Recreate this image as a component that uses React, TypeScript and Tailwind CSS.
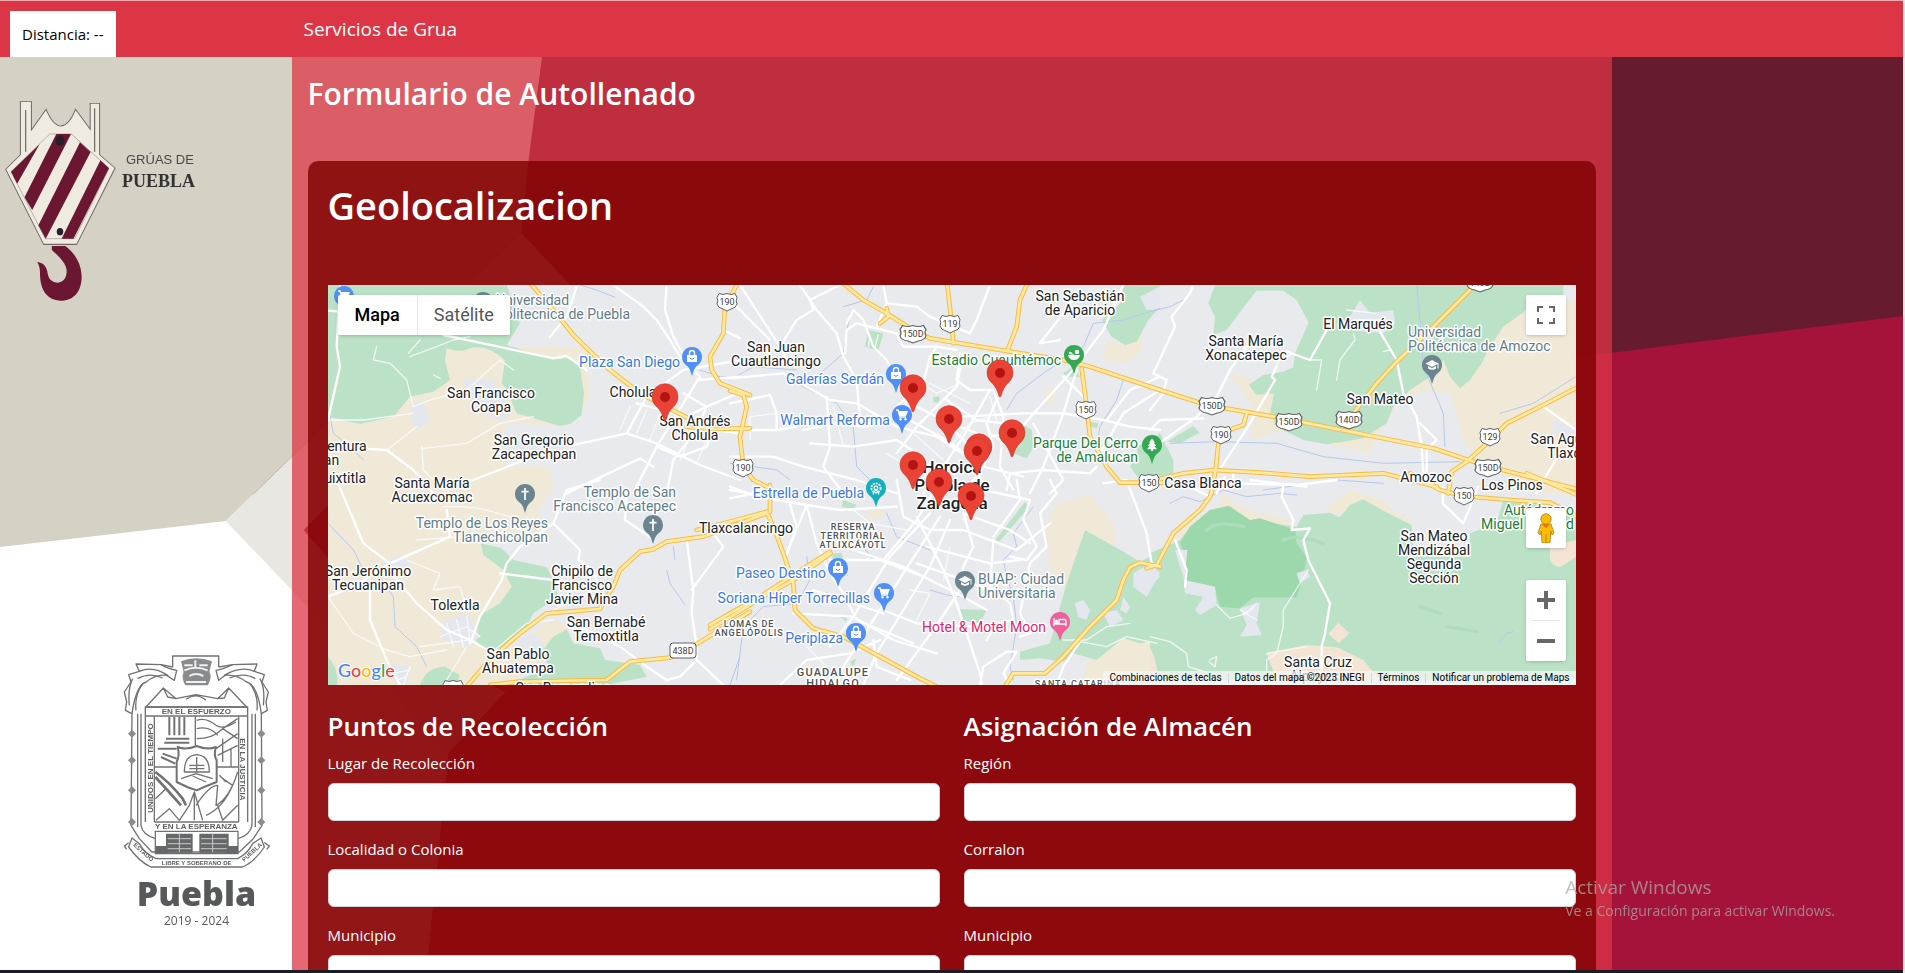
import React from "react";

type Tile = {
  dx: number;
  dy: number;
  sand: string[];
  green: string[];
  forest?: string[];
  town?: string[];
  water?: string[];
  white: string[];
  thin?: string[];
  yellow: string[];
};

/* Six map tiles, drawn at three units per pixel. */
const tiles: Tile[] = [
  {
    dx: -24,
    dy: -15,
    sand: ["M24 200H800L810 350L790 390L740 440L560 430L540 480L560 560L690 560L700 640H24Z"],
    green: [
      "M24 15H480L560 15L600 130L560 195L640 220L720 238L740 228L780 260L792 340L785 405L750 432L720 438L640 415L590 400L560 330L545 310L555 240Q500 190 450 205Q420 220 380 205L375 240L390 300L340 335L270 350L220 410L120 432L24 410Z",
    ],
    town: ["M270 370L310 365L330 420L290 450L275 420Z", "M430 300L520 300L580 400L540 425L450 380Z"],
    water: ["M780 15L830 30L885 52", "M1140 270L1200 290L1260 292", "M30 410L40 460L90 500L130 540"],
    white: [
      "M60 15L50 200L60 260L24 420",
      "M24 92L60 95M370 165L560 205L700 235L740 228L800 270",
      "M880 15L970 80L1010 120L1050 180L1080 230L1140 290L1090 370L1010 500L940 640",
      "M1040 15L1035 90L1060 170L1110 260",
      "M690 170L740 110L770 20",
      "M24 500L200 510L280 570L340 640",
      "M760 495L920 460L980 350L1090 270L1260 240",
      "M640 530L460 600L350 620",
      "M920 460L1010 490L1140 555L1260 600",
      "M950 370L1100 410L1160 380L1230 350L1260 340",
      "M1090 340L1160 380L1130 450L1060 540L1040 640",
      "M1010 500L1080 530L1160 500L1180 450L1260 460",
      "M1210 150L1260 175M1130 300L1260 290",
      "M740 640L960 535L1000 560",
    ],
    thin: [
      "M170 200L160 240L210 250L260 300L280 380",
      "M265 220L300 180M270 230L350 200L400 180L450 170",
      "M280 380L330 360L440 330L540 240L580 270",
      "M310 505L440 490L540 430L640 410",
      "M305 500L310 570L340 600",
      "M340 285L360 295M24 420L130 420L280 400",
      "M200 510L290 440M930 380L900 450M980 390L950 460M1020 400L990 480M1110 470L1080 540M1160 480L1130 550",
    ],
    yellow: [
      "M635 15L700 90L760 165L860 262L960 340L1100 412",
      "M1250 15L1215 80L1210 160L1170 230L1175 270L1200 310L1290 345",
      "M1100 440L1180 447L1290 445",
    ],
  },
  {
    dx: -24,
    dy: 585,
    sand: [
      "M24 0H700L650 100L700 170L480 190L560 250L580 330L480 420L460 480L560 520L600 480L700 415L745 440L660 560L540 620H24Z",
    ],
    green: [
      "M482 190L545 205L580 240L680 262L700 300L715 350L640 400L615 450L560 500L500 515L466 480L480 405L540 370L575 320L550 270L490 225Z",
      "M660 520L700 470L740 448L760 490L840 505L855 540L960 555L980 590L860 615H560L690 560Z",
      "M300 615Q320 560 375 560L418 585L410 620Z",
      "M24 530Q60 570 50 620H24Z",
    ],
    town: ["M360 430L440 400L480 470L440 500L370 480Z", "M180 250L240 225L270 250L210 290Z", "M215 550L270 560L260 615L220 600Z", "M590 480L640 460L680 500L620 520Z"],
    water: ["M24 130L100 210L130 270L180 290L220 350L225 440L290 500L320 560", "M1040 270L1050 310L1095 375", "M1060 200L1065 240", "M1260 530L1230 615"],
    white: [
      "M50 0L130 190L210 250L390 170L380 90",
      "M200 260L290 370L380 450L450 480L520 520",
      "M150 300L150 420L200 540L240 615",
      "M840 0L740 30L700 130L600 200L560 250L545 300L480 410L450 490",
      "M700 130L780 210L775 240L820 270L840 330",
      "M920 40L915 120L990 170",
      "M1100 180L1120 330L1115 400L1130 500L1130 540L1210 615",
      "M1180 160L1210 200L1115 330",
      "M780 440L900 500L980 560L1040 600L1080 590L1130 540",
      "M24 350L100 320L210 250M540 280L700 300",
    ],
    thin: [
      "M290 180L420 170M260 240L360 280L340 330L420 320L440 390",
      "M24 350L100 460L200 510L270 530L380 510",
      "M360 470L440 440L480 470M380 430L400 500M410 420L430 500M440 410L450 480M300 500L450 480",
      "M700 390L740 370L860 310M500 530L620 430L700 420",
      "M370 80L420 80L480 85L570 110L600 150",
      "M270 560L250 615M220 580L270 570M230 600L260 590M380 600L440 500",
    ],
    yellow: [
      "M440 620L500 550L560 495L600 460L680 400L840 387L860 350L880 320L900 270L960 215L1000 208L1040 185L1150 170L1260 130L1340 100",
      "M510 615L600 605L700 603L860 600L930 545L1050 533L1130 492L1290 395",
    ],
  },
  {
    dx: 1206,
    dy: -15,
    sand: ["M1130 180L1180 195L1240 165L1230 220L1190 250L1120 240Z", "M950 320L980 340L960 380L940 360Z"],
    green: [
      "M1175 15H1290V80L1255 120L1220 185L1185 195L1145 170L1115 120L1150 90L1180 60Z",
      "M860 420L905 450L912 500L890 535L850 520L870 480Z",
      "M1290 460L1240 500L1200 560L1230 600H1330V540Z",
      "M415 150L460 160L445 212L405 200Z",
      "M1000 280L1030 260L1050 290L1010 290Z",
      "M610 350L630 350L625 370L610 365Z",
      "M1080 425L1105 430L1100 445L1080 440Z",
    ],
    town: ["M1230 50L1290 20V90L1250 90Z"],
    water: [
      "M1290 85L1180 120L1090 130L1060 200L940 280L860 340L830 390",
      "M360 100L340 220L260 290L200 310L320 370L370 440L380 560L460 640",
      "M0 300L70 260L200 270",
      "M1180 300L1160 360L1110 440L1100 500",
      "M0 550L140 570L180 600",
      "M430 20L410 60L340 80",
    ],
    white: [
      "M30 15L150 200L170 240M0 60L120 180",
      "M210 15L260 90L320 160L340 230L380 300L390 420",
      "M150 200L200 120L250 90L240 60L330 15",
      "M350 130L370 90L400 120L430 200L470 240L500 300L540 400",
      "M345 220L350 150L380 130L500 160L520 200L620 200L680 210",
      "M460 15L470 70L440 140M470 70L560 80L600 110L720 160L740 120L780 15",
      "M0 295L160 280L230 320L300 360L380 370L500 440L620 470L760 560",
      "M620 200L600 230L580 310L500 380",
      "M690 220L680 300L720 330L790 330L820 410L810 560L850 630",
      "M500 520L560 440L620 380L680 320L700 220",
      "M500 400L650 480L760 560L880 590",
      "M560 380L660 430L770 470L860 460L920 390L1020 280L1120 150L1180 15",
      "M700 410L880 400L1000 400L1120 420L1200 440L1290 450",
      "M930 190L1000 100L1050 30M930 190L990 180",
      "M1130 420L1200 330L1290 290M1110 520L1180 400L1290 330",
      "M0 450L140 450L200 440M0 530L130 530L220 560L380 600L500 640",
      "M290 350L300 500L280 560L340 640",
      "M220 450L310 430L400 440L460 430M240 490L370 500L500 480L560 520",
      "M780 330L740 400L700 470L640 560L580 640",
      "M800 360L770 430L790 500L760 560L700 640",
      "M830 630L840 580L940 570L1080 580L1100 560",
      "M1000 290L1060 350M910 430L1000 600L960 640",
      "M620 400L720 500L760 620M650 360L740 420L820 430",
      "M0 370L120 345L140 400L140 450",
      "M1040 270L1000 400L940 560L900 640",
    ],
    thin: [
      "M420 165L415 200M445 165L435 200M780 350L800 420M560 300L620 340L690 310",
      "M600 310L720 370M660 500L720 430L780 410M540 450L640 540M780 460L840 500",
      "M310 380L340 500M140 400L60 410L60 480M470 520L600 600",
    ],
    yellow: [
      "M345 15L400 60L470 100L540 145L600 175L830 213L1000 240L1080 260L1290 330",
      "M652 15L665 130L670 190",
      "M890 15L870 60L860 140L832 213",
      "M0 332L40 345L50 380L30 470L40 560L70 600L120 625",
      "M1055 265L1070 380L1080 470L1130 560L1170 608H1300",
      "M470 85L475 110L450 130",
    ],
  },
  {
    dx: 1206,
    dy: 585,
    sand: [
      "M980 70L1080 45L1120 90L1150 130L1160 210L1065 150L1020 300L1000 330L960 265L955 190L935 150Z",
      "M1070 545L1180 475L1230 490L1290 480V600H1060Z",
      "M400 95L450 85L470 105L430 118Z",
    ],
    green: [
      "M1065 150L1180 215L1230 245L1290 215V480L1230 490L1180 475L1100 540L1030 520L1000 545L930 535L870 540L870 515L960 490L985 400L1010 310Z",
      "M885 66L897 82L808 185L796 180Z",
      "M690 388L770 390L750 430L700 422Z",
      "M340 60L380 75L370 90L335 80Z",
      "M310 220L335 220L340 240L305 240Z",
      "M330 410L350 405L350 425Z",
      "M360 545L380 535L370 560Z",
    ],
    town: ["M1035 370L1060 360L1080 390L1070 420L1045 410Z", "M1120 400L1160 390L1180 420L1140 440Z", "M1180 350L1200 380L1190 400L1170 390Z", "M1210 280L1260 250L1290 280L1250 350L1210 320Z"],
    water: [
      "M910 80L850 160L860 200L820 240L830 290L850 350L860 440L840 560L850 600",
      "M230 230L240 300L200 370L100 380L40 440L20 600",
      "M400 200L430 240M600 330L650 345L690 350",
      "M470 100L500 170L600 210",
    ],
    white: [
      "M120 30L0 55M0 20L80 50L230 75L330 90L500 80",
      "M230 75L170 220M230 75L260 190L300 280L340 340L380 420L550 490",
      "M270 160L370 210L520 260L680 340L770 390",
      "M500 0L520 110L600 150L700 150L860 210L960 130",
      "M600 100L480 230L370 410L300 500",
      "M630 110L520 280L430 420L340 560L320 615",
      "M660 120L600 260L520 390L440 520L400 615",
      "M560 110L640 270L680 370L750 580L755 615",
      "M700 100L730 200L700 260L690 330L610 450L500 600",
      "M620 20L560 120L460 240",
      "M700 100L840 150L900 190M740 0L760 30L900 60L880 120L920 200L890 240L840 230",
      "M790 180L780 320L840 370L850 420L800 430L770 480",
      "M860 0L870 60L790 170M960 0L980 40L930 100L950 200L900 250L870 400L900 460L870 470",
      "M560 250L700 300L780 330M590 200L780 250L870 240",
      "M250 330L340 360L460 400M300 240L450 240L580 290",
      "M460 390L560 430L740 440M190 400L370 410L490 480L620 520",
      "M430 480L440 560L540 600M150 615L230 540L360 520L450 480",
      "M750 615L760 560L830 515L860 515L820 580L840 615",
      "M1050 485L1000 560L980 615M1120 10L1190 0L1250 160L1265 250",
      "M0 30L60 40L170 40L200 140L170 225",
    ],
    thin: [
      "M1050 485L1130 500L1190 470L1280 490M1000 480H1070L1130 440L1200 430",
      "M230 500L290 560M370 90L420 130L530 150M660 200L640 300M540 330L600 340L560 420",
    ],
    yellow: [
      "M-100 150L0 125L110 95L130 140L160 220L190 310L195 390L250 445L340 470L450 530L570 595L620 620",
      "M120 15L120 95",
      "M-60 447L0 412L100 350L190 300L302 220",
      "M-60 435L0 400L90 350L190 285L300 215",
      "M825 620L850 580L945 580L1000 530L1080 440L1160 360L1180 300L1200 262L1230 248L1290 260",
    ],
  },
  {
    dx: 2466,
    dy: -15,
    sand: [
      "M1110 85L1278 60V640H1190L1000 560L940 480L920 400L900 340L820 330L720 400L690 450L660 520L540 495L600 470L700 440L780 330L900 200Z",
      "M230 275L300 300L370 340L370 400L400 450L300 480L310 380L260 310Z",
    ],
    green: [
      "M195 15H1240V80L1130 90L1060 140L1020 200L995 250L960 300L930 325L900 290L880 240L840 290L780 330L730 380L710 430L640 475L530 493L460 480L380 440L360 400L372 340L320 345L296 315L340 285L400 275L430 262L435 220L476 128L440 60L400 32L320 32L275 90L230 150L190 165L195 110L175 70Z",
      "M50 485L130 438L148 458L90 490Z",
      "M-40 500L0 480L40 550L70 570L50 600L-30 600Z",
    ],
    town: ["M600 110L630 60L660 100L730 90L735 130L700 160L600 150Z", "M1200 420L1278 440V500L1220 470Z"],
    water: [
      "M0 95L60 80L100 60",
      "M60 490L200 485L380 490L520 530L700 550L930 545",
      "M800 15L810 120L820 260L880 400L885 500",
      "M1278 290L1150 370L1050 400",
      "M340 630L560 600L700 610",
    ],
    white: [
      "M130 15L120 40L65 110L75 140L10 280L50 300L40 340L0 390",
      "M290 200L240 270L200 350L140 410L0 510",
      "M410 215L480 240L530 150M380 260L365 290L375 300L300 430L215 560",
      "M690 155L740 240L760 340L800 410L815 500L820 580",
      "M810 430L860 480L830 510L830 580",
      "M160 415L30 420L0 450M250 570L250 610L440 615L560 600",
      "M1180 380L1278 450M1230 520L1180 600L1160 640",
    ],
    thin: [
      "M480 240L515 240L500 330M610 160L615 180L570 240L560 300",
      "M590 90L680 100M610 120L700 120M720 210L700 215",
      "M430 220L390 240L370 270",
    ],
    yellow: [
      "M0 320L170 375L400 415L600 455L850 505L1000 555L1290 630",
      "M965 25L900 90L830 160L740 245L680 310L610 400L590 440",
      "M1290 318L1180 375L1070 430L1000 500L950 545L905 575L895 640",
      "M0 605L100 580L190 570L330 578L480 590L700 580L860 620",
      "M205 490L198 560L185 640",
      "M290 400L280 435L210 460",
    ],
  },
  {
    dx: 2466,
    dy: 585,
    sand: [
      "M60 190L110 130L200 80L225 40L250 70L330 100L430 120L440 160L400 160L100 200Z",
      "M520 90L600 30L700 60L730 90L800 130L740 140Z",
    ],
    green: [
      "M0 220L90 180L120 140L180 90L240 78L300 120L440 140L460 105L540 98L570 112L600 75L640 58L700 92L785 135L790 230L960 230L960 160L1040 130L1060 60L1278 90V600H0Z",
    ],
    forest: [
      "M90 190L120 140L180 90L235 78L300 120L330 115L436 150L440 190L470 232L460 290L440 352L310 352L270 385L210 380L195 325L100 300L110 230Z",
    ],
    town: [
      "M75 210L112 210L103 300L195 320L200 375L150 405L135 390L160 350L105 340L100 290Z",
      "M270 385L330 368L320 430L335 465L270 470L290 435Z",
      "M440 280L470 270L480 290L450 310Z",
      "M0 270L30 290L0 320Z",
    ],
    water: ["M60 70L100 50L150 65L220 30L290 50L390 40L440 45", "M1045 490L1070 460L1090 455"],
    white: [
      "M400 15L395 50L430 120L425 150L480 145L460 180L475 240L500 290L540 370L525 460L515 500L515 585",
      "M120 20L180 50M75 180L110 270L105 320",
      "M880 20L878 70L940 130L985 20",
      "M470 20L300 0M225 -10L200 40",
    ],
    thin: [
      "M475 270L400 390L400 440L380 520L350 540L350 575",
      "M200 375L240 415L290 400L320 370M270 390L320 420M280 400L310 385",
      "M0 470L60 485L110 520L115 560L180 580",
      "M178 540L200 530L195 560L178 545M350 520L470 500",
    ],
    yellow: [
      "M-10 265L20 255L70 160L150 90L180 50L190 20L192 0",
      "M780 -20L870 30L940 48L1080 60L1200 68L1290 115",
      "M1130 -20L1290 48",
    ],
  },
];

function Layer({ pick, ...rest }: { pick: (t: Tile) => string[] | undefined } & React.SVGProps<SVGPathElement>) {
  return (
    <>
      {tiles.map((t, i) => (
        <g key={i} transform={`translate(${t.dx} ${t.dy})`}>
          {(pick(t) ?? []).map((d) => (
            <path key={d} d={d} {...rest} />
          ))}
        </g>
      ))}
    </>
  );
}

type Place = [number, number, string[]];

const towns: Place[] = [
  [163, 113, ["San Francisco", "Coapa"]],
  [305, 112, ["Cholula"]],
  [367, 141, ["San Andrés", "Cholula"]],
  [206, 160, ["San Gregorio", "Zacapechpan"]],
  [104, 203, ["Santa María", "Acuexcomac"]],
  [40, 291, ["San Jerónimo", "Tecuanipan"]],
  [127, 325, ["Tolextla"]],
  [254, 291, ["Chipilo de", "Francisco", "Javier Mina"]],
  [278, 342, ["San Bernabé", "Temoxtitla"]],
  [190, 374, ["San Pablo", "Ahuatempa"]],
  [235, 408, ["San Bernardino"]],
  [418, 248, ["Tlaxcalancingo"]],
  [448, 67, ["San Juan", "Cuautlancingo"]],
  [752, 16, ["San Sebastián", "de Aparicio"]],
  [918, 61, ["Santa María", "Xonacatepec"]],
  [1030, 44, ["El Marqués"]],
  [1052, 119, ["San Mateo"]],
  [1098, 197, ["Amozoc"]],
  [1184, 205, ["Los Pinos"]],
  [875, 203, ["Casa Blanca"]],
  [1106, 256, ["San Mateo", "Mendizábal", "Segunda", "Sección"]],
  [990, 382, ["Santa Cruz", "Alpoyeca"]],
  [1240, 159, ["San Agustín", "Tlaxco"]],
  [-4, 166, ["Buenaventura"]],
  [-8, 180, ["Tetlan"]],
  [5, 198, ["Cuauixtitla"]],
];

type Glyph = "bag" | "cart" | "cross" | "cap" | "wheel" | "tree" | "ball" | "bed";
type Poi = {
  pin: [number, number];
  at: [number, number];
  side: "start" | "end";
  lines: string[];
  ink: string;
  fill: string;
  glyph: Glyph;
};

const BLUE = "#3b78e7";
const BLUE_PIN = "#4f8ff7";
const SLATE = "#607d8b";
const SLATE_PIN = "#6b8490";
const GREEN = "#188038";
const GREEN_PIN = "#34a853";

const pois: Poi[] = [
  { pin: [16, 11], at: [0, -20], side: "start", lines: [], ink: BLUE, fill: BLUE_PIN, glyph: "cart" },
  { pin: [155, 17], at: [168, 20], side: "start", lines: ["Universidad", "Politecnica de Puebla"], ink: SLATE, fill: SLATE_PIN, glyph: "cap" },
  { pin: [364, 72], at: [352, 82], side: "end", lines: ["Plaza San Diego"], ink: BLUE, fill: BLUE_PIN, glyph: "bag" },
  { pin: [568, 89], at: [556, 99], side: "end", lines: ["Galerías Serdán"], ink: BLUE, fill: BLUE_PIN, glyph: "bag" },
  { pin: [574, 130], at: [562, 140], side: "end", lines: ["Walmart Reforma"], ink: BLUE, fill: BLUE_PIN, glyph: "cart" },
  { pin: [548, 203], at: [536, 213], side: "end", lines: ["Estrella de Puebla"], ink: BLUE, fill: "#12b0bd", glyph: "wheel" },
  { pin: [510, 283], at: [498, 293], side: "end", lines: ["Paseo Destino"], ink: BLUE, fill: BLUE_PIN, glyph: "bag" },
  { pin: [556, 308], at: [542, 318], side: "end", lines: ["Soriana Híper Torrecillas"], ink: BLUE, fill: BLUE_PIN, glyph: "cart" },
  { pin: [528, 348], at: [515, 358], side: "end", lines: ["Periplaza"], ink: BLUE, fill: BLUE_PIN, glyph: "bag" },
  { pin: [732, 337], at: [718, 347], side: "end", lines: ["Hotel & Motel Moon"], ink: "#e0246c", fill: "#f0609a", glyph: "bed" },
  { pin: [637, 296], at: [650, 299], side: "start", lines: ["BUAP: Ciudad", "Universitaria"], ink: SLATE, fill: SLATE_PIN, glyph: "cap" },
  { pin: [746, 70], at: [733, 80], side: "end", lines: ["Estadio Cuauhtémoc"], ink: GREEN, fill: GREEN_PIN, glyph: "ball" },
  { pin: [824, 160], at: [810, 163], side: "end", lines: ["Parque Del Cerro", "de Amalucan"], ink: GREEN, fill: GREEN_PIN, glyph: "tree" },
  { pin: [325, 240], at: [348, 212], side: "end", lines: ["Templo de San", "Francisco Acatepec"], ink: SLATE, fill: SLATE_PIN, glyph: "cross" },
  { pin: [197, 209], at: [220, 243], side: "end", lines: ["Templo de Los Reyes", "Tlanechicolpan"], ink: SLATE, fill: SLATE_PIN, glyph: "cross" },
  { pin: [1104, 80], at: [1080, 52], side: "start", lines: ["Universidad", "Politécnica de Amozoc"], ink: SLATE, fill: SLATE_PIN, glyph: "cap" },
  { pin: [1218, 238], at: [1246, 230], side: "end", lines: ["Autódromo", "Miguel E. Abed"], ink: GREEN, fill: GREEN_PIN, glyph: "ball" },
];

const glyphs: Record<Glyph, React.ReactNode> = {
  bag: (
    <>
      <path d="M-5 -2H5V5H-5Z" fill="#fff" />
      <path d="M-2.5 -2V-4A2.5 2.5 0 0 1 2.5 -4V-2" fill="none" stroke="#fff" strokeWidth="1.4" />
      <path d="M-2.3 1Q0 3.8 2.3 1" fill="none" stroke={BLUE_PIN} strokeWidth="1" />
    </>
  ),
  cart: (
    <>
      <path d="M-6 -5H-4L-2 2H4" fill="none" stroke="#fff" strokeWidth="1.4" />
      <path d="M-3.5 -4H6L4 1H-2Z" fill="#fff" />
      <circle cx="-1.5" cy="4.2" r="1.2" fill="#fff" />
      <circle cx="3.5" cy="4.2" r="1.2" fill="#fff" />
    </>
  ),
  cross: <path d="M0 -6V6M-3.6 -2.4H3.6" stroke="#fff" strokeWidth="1.7" />,
  cap: (
    <>
      <path d="M-6.5 -1.5L0 -5L6.5 -1.5L0 2Z" fill="#fff" />
      <path d="M-4 1V3.5Q0 6 4 3.5V1L0 3.2Z" fill="#fff" />
      <path d="M6 -1.5V3.5" stroke="#fff" strokeWidth="1" />
    </>
  ),
  wheel: (
    <>
      <circle r="4.6" fill="none" stroke="#fff" strokeWidth="1.8" strokeDasharray="2 1" />
      <circle r="1.8" fill="none" stroke="#fff" strokeWidth="1.2" />
      <path d="M0 1L-3 6.5M0 1L3 6.5" stroke="#fff" strokeWidth="1.1" />
    </>
  ),
  tree: <path d="M0 -6.5L3 -2.5H1.8L4.2 1H2.4L5 4.2H1V6H-1V4.2H-5L-2.4 1H-4.2L-1.8 -2.5H-3Z" fill="#fff" />,
  ball: (
    <>
      <path d="M-6 0H6Q5 5 0 5Q-5 5 -6 0Z" fill="#fff" />
      <circle cx="3" cy="-3" r="2.2" fill="#fff" />
      <path d="M-5 -1Q-6 -4 -3 -3L0 0Z" fill="#fff" />
    </>
  ),
  bed: (
    <>
      <path d="M-6 -4V4M-6 2H6M6 4V-1Q6 -2.5 4.5 -2.5H-1V1H-6" fill="none" stroke="#fff" strokeWidth="1.3" />
      <circle cx="-3.5" cy="-1" r="1.5" fill="#fff" />
    </>
  ),
};

const shields: [number, number, string][] = [
  [399, 17, "190"],
  [585, 49, "150D"],
  [622, 39, "119"],
  [758, 125, "150"],
  [415, 183, "190"],
  [821, 198, "150"],
  [884, 121, "150D"],
  [961, 137, "150D"],
  [1021, 135, "140D"],
  [893, 150, "190"],
  [1162, 152, "129"],
  [1160, 183, "150D"],
  [1152, -2, "140D"],
  [1136, 211, "150"],
  [125, 404, "190"],
];

const markers: [number, number][] = [
  [672, 88],
  [585, 103],
  [337, 112],
  [621, 134],
  [684, 148],
  [651, 162],
  [649, 166],
  [585, 180],
  [611, 197],
  [643, 211],
];

const halo = { stroke: "#fff", strokeWidth: 3, strokeLinejoin: "round" as const, paintOrder: "stroke" as const };

function Lines({ x, y, lines, step = 14 }: { x: number; y: number; lines: string[]; step?: number }) {
  return (
    <>
      {lines.map((line, i) => (
        <text key={line + i} x={x} y={y + i * step} {...halo}>
          {line}
        </text>
      ))}
    </>
  );
}

function MapDrawing() {
  return (
    <svg
      className="block h-full w-full font-[Roboto,sans-serif]"
      viewBox="0 0 1248 400"
      preserveAspectRatio="xMidYMid slice"
      role="img"
      aria-label="Mapa de Puebla"
    >
      <rect width="1248" height="400" fill="#e8eaed" />
      <g transform="scale(0.33333)" strokeLinecap="round" strokeLinejoin="round">
        <Layer pick={(t) => t.sand} fill="#f1e9d8" />
        <Layer pick={(t) => t.green} fill="#bbe2c6" />
        <Layer pick={(t) => t.forest} fill="#9dd7ac" />
        <Layer pick={(t) => t.town} fill="#e5e7ee" />
        <g transform="translate(2466 585)">
          <path d="M350 520L470 495L560 502L640 540L690 600H380Z" fill="#f4e4d4" />
          <path d="M565 428L598 460L567 490L535 462Z" fill="#f4e4d4" />
          <path d="M1200 200L1278 180V230L1230 262Q1195 255 1200 220Z" fill="#f4e4d4" />
          <path d="M0 500Q20 540 25 600H0Z" fill="#f4e4d4" />
          <path d="M170 150Q200 120 280 140M400 180Q440 160 520 190M810 380L870 400M890 440L980 455" fill="none" stroke="#aedcbc" strokeWidth="10" />
        </g>
        <Layer pick={(t) => t.water} fill="none" stroke="#b5c9ee" strokeWidth="3" />
        <Layer pick={(t) => t.thin} fill="none" stroke="#fbfcfd" strokeOpacity="0.8" strokeWidth="4" />
        <Layer pick={(t) => t.white} fill="none" stroke="#ffffff" strokeWidth="7" />
        <Layer pick={(t) => t.yellow} fill="none" stroke="#f8bb45" strokeWidth="14" />
        <Layer pick={(t) => t.yellow} fill="none" stroke="#fdeaa0" strokeWidth="8" />
      </g>
      <g fontSize="9" textAnchor="middle" fill="#3c4043">
        {shields.map(([x, y, n]) => (
          <g key={`${x}-${y}`} transform={`translate(${x} ${y})`}>
            <path
              transform={n.length > 3 ? "scale(1.3 1)" : undefined}
              d="M-8 -8.5Q-4 -6.5 0 -8.5Q4 -6.5 8 -8.5L10 -4.5Q8.500 -1 10 2Q9 6 4 7L0 9L-4 7Q-9 6 -10 2Q-8.500 -1 -10 -4.5Z"
              fill="#fff"
              stroke="#5f6368"
              strokeWidth="1"
            />
            <text y="3">{n}</text>
          </g>
        ))}
        <rect x="342" y="358" width="26" height="15" rx="3" fill="#fff" stroke="#5f6368" />
        <text x="355" y="369">438D</text>
      </g>
      <g fontSize="14" textAnchor="middle" fill="#202124">
        {towns.map(([x, y, lines]) => (
          <Lines key={`${x}-${y}`} x={x} y={y} lines={lines} />
        ))}
      </g>
      <g fontSize="9" textAnchor="middle" fill="#4d5156" fontWeight="500" className="tracking-widest">
        <Lines x={525} y={245} lines={["RESERVA", "TERRITORIAL", "ATLIXCÁYOTL"]} step={9} />
        <Lines x={421} y={342} lines={["LOMAS DE", "ANGELÓPOLIS"]} step={9} />
        <Lines x={750} y={402} lines={["SANTA CATARINA"]} />
      </g>
      <g fontSize="11" textAnchor="middle" fill="#4d5156" fontWeight="500" className="tracking-widest">
        <Lines x={505} y={391} lines={["GUADALUPE", "HIDALGO"]} step={11} />
      </g>
      <g fontSize="17" textAnchor="middle" fill="#202124" fontWeight="500">
        <Lines x={624} y={188} lines={["Heroica", "Puebla de", "Zaragoza"]} step={18} />
      </g>
      {pois.map((p) => (
        <g key={`${p.pin[0]}-${p.pin[1]}`}>
          <g fontSize="14" textAnchor={p.side} fill={p.ink}>
            <Lines x={p.at[0]} y={p.at[1]} lines={p.lines} />
          </g>
          <g transform={`translate(${p.pin[0]} ${p.pin[1]})`}>
            <path d="M0 19L-2 13Q-3 10 -6 8A10 10 0 1 1 6 8Q3 10 2 13Z" fill={p.fill} />
            {glyphs[p.glyph]}
          </g>
        </g>
      ))}
      {markers.map(([x, y]) => (
        <g key={`${x}-${y}`} transform={`translate(${x} ${y})`}>
          <path
            d="M0 24C-1 24 -1.500 21 -2.500 18.500C-4 14 -7 11 -10 8A13 13 0 1 1 10 8C7 11 4 14 2.500 18.500C1.500 21 1 24 0 24Z"
            fill="#ea4335"
            stroke="#c5352a"
            strokeWidth="0.6"
          />
          <circle r="5" fill="#b31412" />
        </g>
      ))}
      <g fontSize="18" fontFamily="Lato, sans-serif" fontWeight="500" paintOrder="stroke" stroke="#fff" strokeWidth="2">
        <text x="10" y="392">
          <tspan fill="#4285f4">G</tspan>
          <tspan fill="#ea4335">o</tspan>
          <tspan fill="#fbbc04">o</tspan>
          <tspan fill="#4285f4">g</tspan>
          <tspan fill="#34a853">l</tspan>
          <tspan fill="#ea4335">e</tspan>
        </text>
      </g>
    </svg>
  );
}

function MapPanel() {
  const box = "bg-white shadow-[0_1px_4px_-1px_rgba(0,0,0,0.3)]";
  return (
    <div className="relative mt-14 h-[400px] overflow-hidden font-[Roboto,sans-serif]">
      <MapDrawing />
      <div className={`absolute left-2.5 top-2.5 flex h-10 rounded-xs text-lg ${box}`}>
        <button type="button" className="border-r border-gray-200 px-[17px] font-medium text-black">
          Mapa
        </button>
        <button type="button" className="px-4 text-[#565656]">
          Satélite
        </button>
      </div>
      <button
        type="button"
        aria-label="Pantalla completa"
        className={`absolute right-2.5 top-2.5 flex size-10 items-center justify-center rounded-xs ${box}`}
      >
        <svg width="18" height="18" viewBox="0 0 18 18" fill="none" stroke="#666" strokeWidth="2">
          <path d="M1 6V1H6M12 1H17V6M17 12V17H12M6 17H1V12" />
        </svg>
      </button>
      <button
        type="button"
        aria-label="Street View"
        className={`absolute right-2.5 top-[223px] flex size-10 items-center justify-center rounded-xs ${box}`}
      >
        <svg width="18" height="30" viewBox="0 0 18 30">
          <path
            d="M4 11H14L17 20L15 22L13.500 18V21L13 30H5L4.500 21V18L3 22L1 20Z"
            fill="#fbbc04"
            stroke="#b07a1c"
            strokeWidth="0.8"
          />
          <path d="M5 11H13L9 15Z" fill="#e8710a" />
          <path d="M9 21V30" stroke="#b07a1c" strokeWidth="0.8" />
          <circle cx="9" cy="6" r="5.200" fill="#fbbc04" stroke="#b07a1c" strokeWidth="0.8" />
        </svg>
      </button>
      <div className={`absolute right-2.5 top-[295px] flex w-10 flex-col items-center rounded-xs ${box}`}>
        <button type="button" aria-label="Acercar" className="flex size-10 items-center justify-center">
          <svg width="18" height="18" viewBox="0 0 18 18" stroke="#666" strokeWidth="4">
            <path d="M9 0V18M0 9H18" />
          </svg>
        </button>
        <div className="h-px w-7 bg-gray-200" />
        <button type="button" aria-label="Alejar" className="flex size-10 items-center justify-center">
          <svg width="18" height="18" viewBox="0 0 18 18" stroke="#666" strokeWidth="4">
            <path d="M0 9H18" />
          </svg>
        </button>
      </div>
      <div className="absolute bottom-0 right-0 flex h-3.5 items-center divide-x divide-gray-300 bg-[#f5f5f5]/75 text-[10px] leading-none text-black">
        <button type="button" className="px-1.5">
          Combinaciones de teclas
        </button>
        <span className="px-1.5">Datos del mapa ©2023 INEGI</span>
        <a href="#terminos" className="px-1.5">
          Términos
        </a>
        <a href="#notificar" className="px-1.5">
          Notificar un problema de Maps
        </a>
      </div>
    </div>
  );
}

function Backdrop() {
  return (
    <svg
      className="absolute inset-0 h-full w-full"
      viewBox="0 0 1905 973"
      preserveAspectRatio="none"
      aria-hidden="true"
    >
      <rect width="1905" height="973" fill="#671b2f" />
      <path d="M0 480H226L450 600L506 692L449 753L427 973H0Z" fill="#ffffff" />
      <path d="M0 0H550L529 161L522 233L226 521L0 547Z" fill="#d5d1c5" />
      <path d="M226 521L522 233L571 285L640 400L506 692L449 753L292 590Z" fill="#e8e7e2" />
      <path d="M304 530L522 310L571 285L640 400L506 692L400 640Z" fill="#8c1c38" />
      <path d="M1905 316L1612 353L600 440L506 692L449 753L427 973H1905Z" fill="#a5123a" />
    </svg>
  );
}

function CraneLogo() {
  return (
    <svg className="mt-10 w-[200px]" viewBox="0 97 200 210" role="img" aria-label="Grúas de Puebla">
      <g transform="scale(0.40816 0.33333)">
        <path
          d="M50 305H77V390L113 328Q130 378 150 378Q170 375 185 328L221 388V310H244V464L282 504L188 733H107L14 508L50 464Z"
          fill="#f0ebe1"
          stroke="#6f6a66"
          strokeWidth="2.500"
        />
        <path d="M63 330V455M232 325V455" stroke="#55504e" strokeWidth="2.500" fill="none" />
        <path d="M122 402H175L267 505L183 716H111L27 515Z" fill="#f0ebe1" stroke="#8b8580" strokeWidth="1.500" />
        <g fill="#6b1731">
          <path d="M97 433L42 551L27 515Z" />
          <path d="M138 402H174L79 630L60 592Z" />
          <path d="M196 427L222 456L112 716L94 676Z" />
          <path d="M246 481L267 505L180 716H151Z" />
          <path d="M127 738H160C185 760 200 795 200 830C200 875 180 902 150 902C115 902 98 870 98 820C98 805 96 795 91 786C108 788 115 802 117 822C120 840 130 848 143 848C157 846 165 830 163 808C160 785 140 765 127 750Z" />
        </g>
        <ellipse cx="147" cy="422" rx="11" ry="16" fill="#27202a" />
        <ellipse cx="147" cy="695" rx="8" ry="11" fill="#27202a" />
        <path d="M107 733H188" stroke="#6f6a66" strokeWidth="4" />
      </g>
      <text x="126" y="164" fontSize="13" fontFamily="'Liberation Sans', sans-serif" fill="#4a4747">
        GRÚAS DE
      </text>
      <text x="122" y="187" fontSize="18" fontWeight="700" fontFamily="'Liberation Serif', serif" fill="#343132">
        PUEBLA
      </text>
    </svg>
  );
}

function Crest() {
  const beads = [285, 365, 455, 550];
  return (
    <div className="mr-3.5 flex flex-col items-center self-end text-[#57585a]">
      <svg className="w-[162px]" viewBox="80 40 486 664" role="img" aria-label="Escudo de Puebla">
        <g fill="none" stroke="#717274" strokeWidth="4" strokeLinejoin="round">
          <path d="M250 85V52H388V85M250 85L215 78L140 76L150 98L118 108L125 130L105 160L112 190L108 215L128 225L125 560L150 600" />
          <path d="M388 85L430 78L503 76L495 98L525 108L518 130L537 160L530 190L534 215L516 225L518 560L492 600" />
          <path d="M150 98Q190 80 235 110Q200 105 170 130Q140 140 128 225M495 98Q455 80 405 110Q440 105 472 130Q505 140 516 225" />
          <path d="M145 120Q180 100 220 118M160 135Q135 170 140 215M130 120Q115 150 120 200M498 120Q465 100 420 118M482 135Q508 170 503 215M512 120Q528 150 522 200M215 78Q240 92 262 95L255 125L232 110M430 78Q400 92 380 95L388 125L408 110" />
          <path d="M155 225V560Q160 590 200 600M488 225V560Q482 590 445 600M145 225V565M498 225V565" />
          <path d="M170 205L222 148L260 180L320 168L385 180L418 148L472 205ZM222 148L235 175L260 180M418 148L405 178L385 180M290 182Q320 160 350 185" />
          <path d="M168 205H475V232H168ZM195 232V550M448 232V550M168 232V550M475 232V550M195 550H448M318 232V320M195 385H262M380 385H448" />
          <path d="M322 245Q350 235 380 260Q400 275 440 250M322 270Q360 260 385 290M322 300Q370 300 400 270L445 300M400 270L445 240M380 330L445 285M385 350L445 320M425 330V385M400 300V370" />
          <path d="M240 235V290M255 235V290M270 235V290M285 235V290M230 300H300M225 312H300M205 330H262M220 345L262 360M215 355L258 375" strokeWidth="6" />
          <path d="M265 325Q290 335 322 322Q355 335 380 325Q372 350 382 365V430Q355 440 322 455Q290 445 262 430V370Q272 350 265 325Z" strokeWidth="6" />
          <path d="M285 400Q285 350 322 348Q360 350 360 400ZM300 380H345M300 390H345M322 355V400M275 420L320 405L370 420M310 412L350 430" />
          <path d="M198 400Q240 430 280 480L290 500M198 415Q240 460 275 500" strokeWidth="8" />
          <path d="M198 480L230 450M200 545L240 510L270 545L300 500L315 460V545M315 460L340 545M320 500Q360 440 385 440L380 500Q420 480 445 400M350 530Q400 510 430 440M385 500L400 545L445 500M400 420L430 440M390 410L410 430" />
          <path d="M150 600L188 640H450L492 600M128 598L118 625Q150 670 185 685H460Q495 670 525 625L515 598L490 615Q475 645 445 660H200Q165 645 150 615ZM118 612L105 622L112 632M525 612L540 622L532 632" />
          <path d="M198 578H446V645H198Z" />
        </g>
        <path d="M230 585H310V642H230ZM330 585H418V642H330ZM200 622H235V645H200ZM410 622H446V645H410Z" fill="#67686a" />
        <path d="M235 600H305M235 615H305M235 630H305M335 600H412M335 615H412M335 630H412M270 585V640M370 585V640" stroke="#c9c9c9" strokeWidth="3" />
        <path d="M275 68Q320 50 368 68L360 100Q370 115 355 140H288Q275 118 283 100Z" fill="#8a8b8d" />
        <path d="M285 80H310M330 80H355M285 95Q320 80 355 95M300 112Q320 100 342 112M290 130H350M318 65V90" stroke="#f0f0f0" strokeWidth="6" fill="none" />
        {beads.map((y) => (
          <g key={y} fill="#8a8b8d">
            <path d={`M116 ${y}L128 ${y - 12}L140 ${y}L128 ${y + 12}Z`} />
            <path d={`M504 ${y}L516 ${y - 12}L528 ${y}L516 ${y + 12}Z`} />
          </g>
        ))}
        <g fill="#5f6062" fontFamily="'Liberation Sans', sans-serif" fontWeight="700" fontSize="24" textAnchor="middle">
          <text x="321" y="227">EN EL ESFUERZO</text>
          <text x="321" y="572">Y EN LA ESPERANZA</text>
          <text transform="translate(190 388) rotate(-90)">UNIDOS EN EL TIEMPO</text>
          <text transform="translate(453 392) rotate(90)">EN LA JUSTICIA</text>
          <text x="322" y="680" fontSize="18">LIBRE Y SOBERANO DE</text>
          <text transform="translate(158 645) rotate(42)" fontSize="18">ESTADO</text>
          <text transform="translate(492 645) rotate(-42)" fontSize="18">PUEBLA</text>
        </g>
      </svg>
      <p className="text-[34px] font-extrabold leading-10">Puebla</p>
      <p className="text-xs leading-4">2019 - 2024</p>
    </div>
  );
}

function Field({ id, label }: { id: string; label: string }) {
  return (
    <div className="mb-4">
      <label htmlFor={id} className="mb-2 block text-[15px] leading-6">
        {label}
      </label>
      <input
        id={id}
        type="text"
        className="block h-[38px] w-full rounded-md border border-[#ced4da] bg-white px-3 text-base text-gray-900"
      />
    </div>
  );
}

function FieldGroup({ title, prefix, labels }: { title: string; prefix: string; labels: string[] }) {
  return (
    <fieldset className="min-w-0">
      <legend className="mb-2 text-[26px] font-semibold leading-[34px]">{title}</legend>
      {labels.map((label, i) => (
        <Field key={label} id={`${prefix}-${i}`} label={label} />
      ))}
    </fieldset>
  );
}

export default function App() {
  return (
    <div className="relative h-screen overflow-hidden border-r-2 border-[#f8dfe2] font-['Open_Sans','Noto_Sans',sans-serif] text-white">
      <Backdrop />
      <div className="relative h-full overflow-y-auto [scrollbar-width:none]">
        <header className="grid h-[57px] grid-cols-[1fr_minmax(0,1320px)_1fr] border-t border-[#f0a9b0] bg-[#dc3545]">
          <div className="ml-2.5 mt-2.5 flex items-center self-stretch justify-self-start bg-white px-3 text-[15px] text-black">
            Distancia: --
          </div>
          <a href="#inicio" className="flex items-center px-3 text-[19px]">
            Servicios de Grua
          </a>
        </header>
        <div className="grid grid-cols-[1fr_minmax(0,1320px)_1fr]">
          <aside className="sticky top-0 flex h-[calc(100vh-57px)] flex-col justify-between pb-11">
            <CraneLogo />
            <Crest />
          </aside>
          <main className="bg-[#dc3545]/75 px-4 pt-[18px]">
            <h2 className="text-3xl font-semibold leading-[38px]">Formulario de Autollenado</h2>
            <section className="mt-12 rounded-[10px] bg-[#7d0000]/80 p-5">
              <h1 className="text-[38px] font-semibold leading-[48px]">Geolocalizacion</h1>
              <MapPanel />
              <form className="mt-6 grid grid-cols-2 gap-6">
                <FieldGroup
                  title="Puntos de Recolección"
                  prefix="recoleccion"
                  labels={["Lugar de Recolección", "Localidad o Colonia", "Municipio"]}
                />
                <FieldGroup title="Asignación de Almacén" prefix="almacen" labels={["Región", "Corralon", "Municipio"]} />
              </form>
            </section>
          </main>
          <div />
        </div>
      </div>
      <div className="pointer-events-none absolute bottom-[52px] right-[68px] text-[#a9a9a9]/75">
        <p className="text-[19px] leading-7">Activar Windows</p>
        <p className="text-sm leading-5">Ve a Configuración para activar Windows.</p>
      </div>
      <div className="absolute inset-x-0 bottom-0 h-[3px] bg-[#1b1c28]" />
    </div>
  );
}
